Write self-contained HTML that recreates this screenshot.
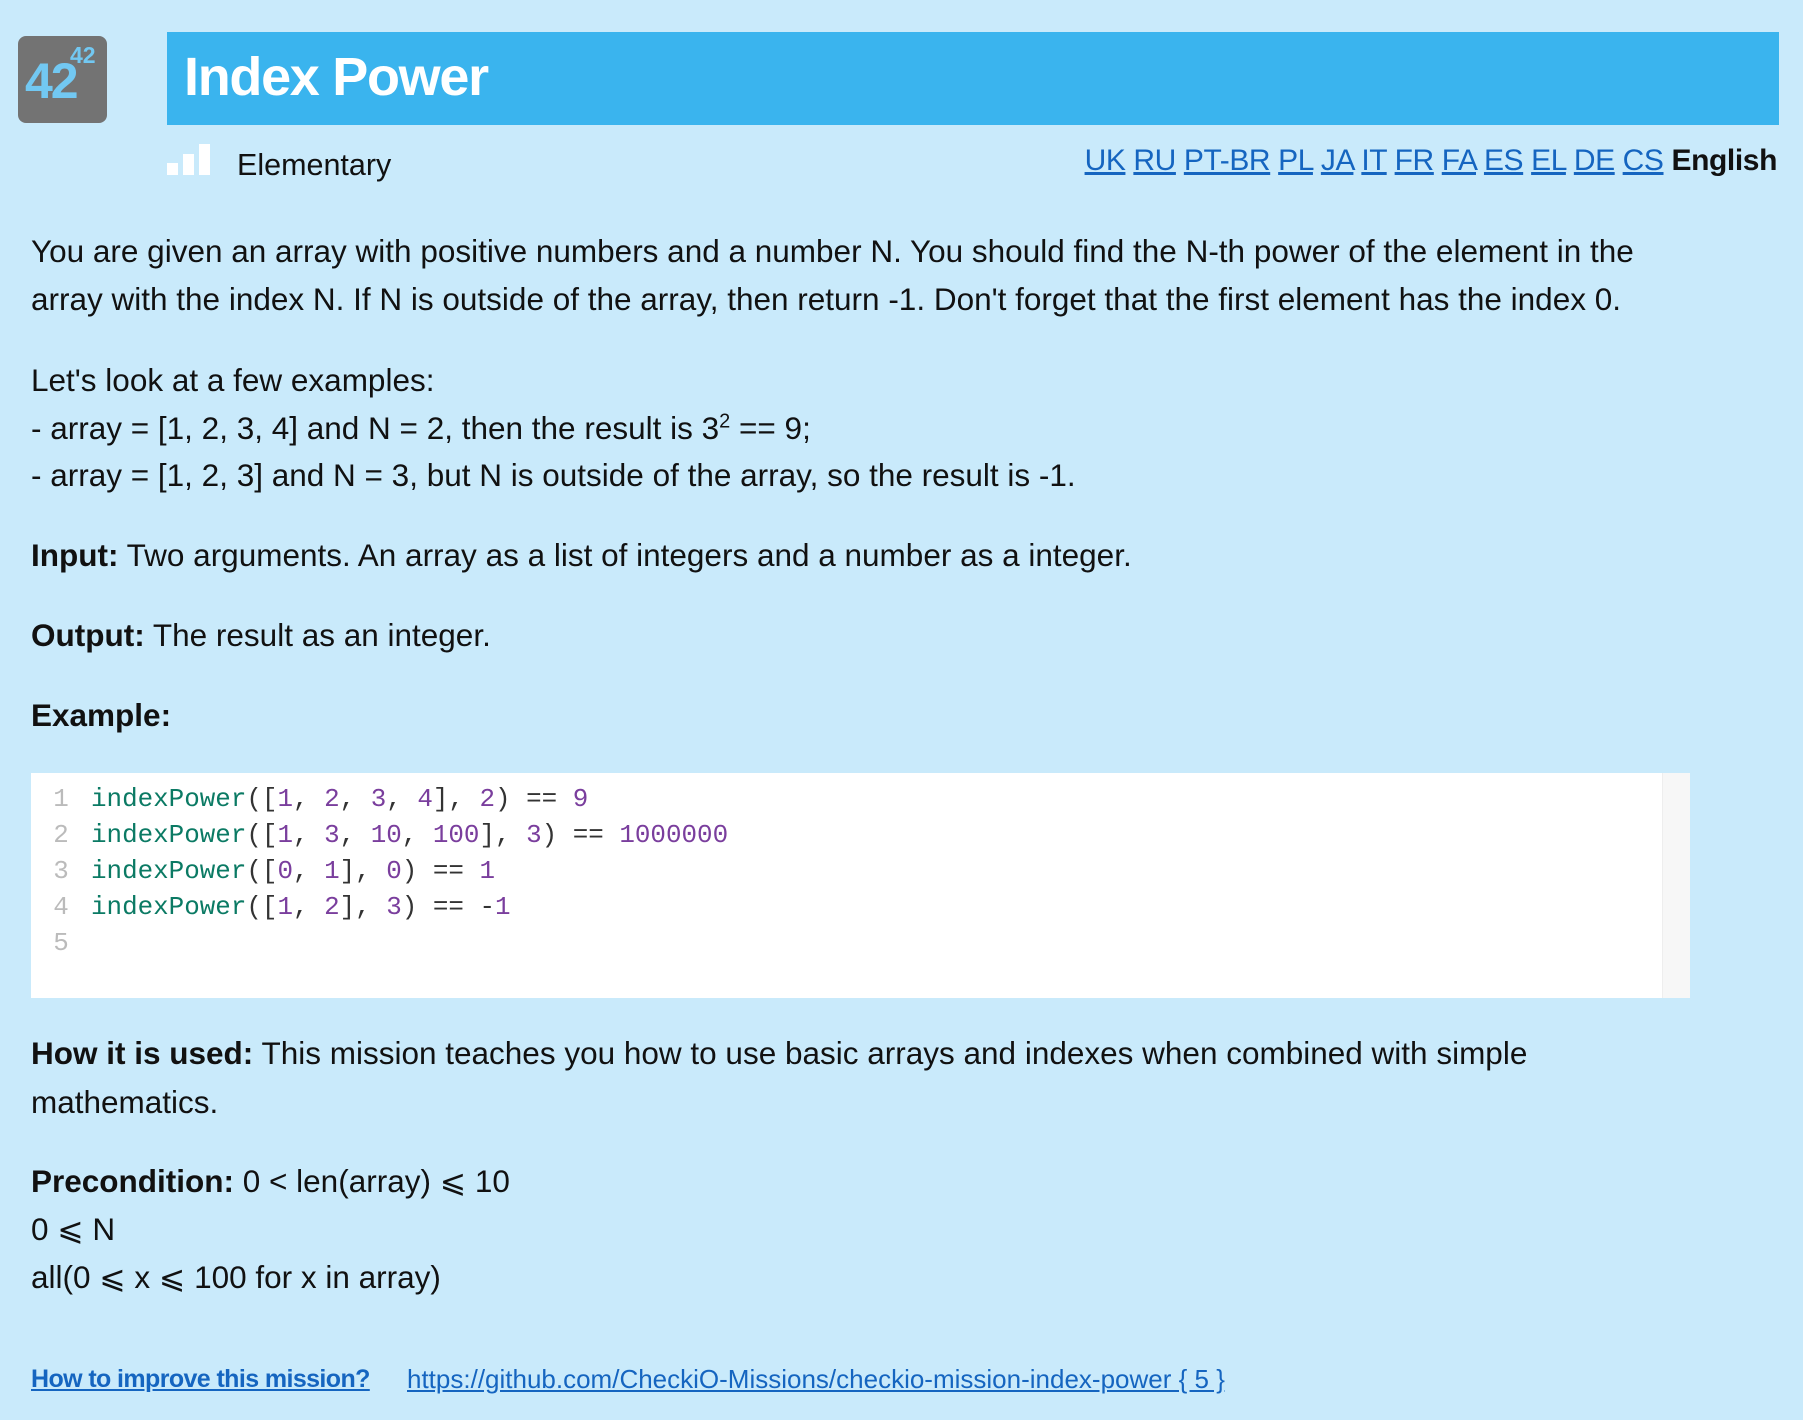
<!DOCTYPE html>
<html><head><meta charset="utf-8"><style>
body{margin:0;width:1803px;height:1420px;background:#c9eafb;font-family:"Liberation Sans",sans-serif;color:#111;position:relative;overflow:hidden}
.a{position:absolute;white-space:nowrap}
.t{font-size:31.5px;line-height:48px;left:31px}
a{color:#1565c0;text-decoration:underline}
.code{position:absolute;left:31px;top:773px;width:1659px;height:225px;background:#fff}
.sb{position:absolute;right:0;top:0;width:27px;height:225px;background:#f7f7f7;border-left:1px solid #eee}
.cl{position:absolute;left:0;font-family:"Liberation Mono",monospace;font-size:25.9px;line-height:36px;white-space:pre}
.n{color:#bbb;display:inline-block;width:60px;text-align:center}
.f{color:#0b7a64}.p{color:#7a3e9d}.o{color:#333}
sup{line-height:0;font-size:20px}
</style></head><body>
<div class="a" style="left:18px;top:36px;width:89px;height:87px;background:#737373;border-radius:8px">
<div class="a" style="left:7px;top:16px;font-size:50px;font-weight:bold;color:#72c8f2;letter-spacing:-2px">42</div>
<div class="a" style="left:52px;top:6px;font-size:23px;font-weight:bold;color:#72c8f2">42</div>
</div>
<div class="a" style="left:167px;top:32px;width:1612px;height:93px;background:#3ab4ee"></div>
<div class="a" style="left:184px;top:42px;font-size:54px;font-weight:bold;color:#fff;line-height:70px;letter-spacing:-1.3px">Index Power</div>
<div class="a" style="left:167px;top:163px;width:11px;height:12px;background:#fff"></div>
<div class="a" style="left:183px;top:154px;width:11px;height:21px;background:#fff"></div>
<div class="a" style="left:199px;top:144px;width:11px;height:31px;background:#fff"></div>
<div class="a" style="left:237px;top:141px;font-size:30.5px;line-height:48px">Elementary</div>
<div class="a" style="right:26px;top:137px;font-size:30px;line-height:48px;letter-spacing:-0.4px"><a>UK</a> <a>RU</a> <a>PT-BR</a> <a>PL</a> <a>JA</a> <a>IT</a> <a>FR</a> <a>FA</a> <a>ES</a> <a>EL</a> <a>DE</a> <a>CS</a> <b>English</b></div>

<div class="a t" style="top:227px">You are given an array with positive numbers and a number N. You should find the N-th power of the element in the</div>
<div class="a t" style="top:275px">array with the index N. If N is outside of the array, then return -1. Don't forget that the first element has the index 0.</div>
<div class="a t" style="top:356px">Let's look at a few examples:</div>
<div class="a t" style="top:404px">- array = [1, 2, 3, 4] and N = 2, then the result is 3<sup>2</sup> == 9;</div>
<div class="a t" style="top:451px">- array = [1, 2, 3] and N = 3, but N is outside of the array, so the result is -1.</div>
<div class="a t" style="top:531px"><b>Input:</b> Two arguments. An array as a list of integers and a number as a integer.</div>
<div class="a t" style="top:611px"><b>Output:</b> The result as an integer.</div>
<div class="a t" style="top:691px"><b>Example:</b></div>

<div class="code">
<div class="cl" style="top:8px"><span class="n">1</span><span class="f">indexPower</span><span class="o">([</span><span class="p">1</span><span class="o">, </span><span class="p">2</span><span class="o">, </span><span class="p">3</span><span class="o">, </span><span class="p">4</span><span class="o">], </span><span class="p">2</span><span class="o">) == </span><span class="p">9</span></div>
<div class="cl" style="top:44px"><span class="n">2</span><span class="f">indexPower</span><span class="o">([</span><span class="p">1</span><span class="o">, </span><span class="p">3</span><span class="o">, </span><span class="p">10</span><span class="o">, </span><span class="p">100</span><span class="o">], </span><span class="p">3</span><span class="o">) == </span><span class="p">1000000</span></div>
<div class="cl" style="top:80px"><span class="n">3</span><span class="f">indexPower</span><span class="o">([</span><span class="p">0</span><span class="o">, </span><span class="p">1</span><span class="o">], </span><span class="p">0</span><span class="o">) == </span><span class="p">1</span></div>
<div class="cl" style="top:116px"><span class="n">4</span><span class="f">indexPower</span><span class="o">([</span><span class="p">1</span><span class="o">, </span><span class="p">2</span><span class="o">], </span><span class="p">3</span><span class="o">) == -</span><span class="p">1</span></div>
<div class="cl" style="top:152px"><span class="n">5</span></div>
<div class="sb"></div>
</div>

<div class="a t" style="top:1029px"><b>How it is used:</b> This mission teaches you how to use basic arrays and indexes when combined with simple</div>
<div class="a t" style="top:1078px">mathematics.</div>
<div class="a t" style="top:1157px"><b>Precondition:</b> 0 &lt; len(array) ⩽ 10</div>
<div class="a t" style="top:1205px">0 ⩽ N</div>
<div class="a t" style="top:1253px">all(0 ⩽ x ⩽ 100 for x in array)</div>

<div class="a" style="left:31px;top:1365px;font-size:25px;line-height:28px;letter-spacing:-0.6px"><a><b>How to improve this mission?</b></a></div>
<div class="a" style="left:407px;top:1365px;font-size:26px;line-height:28px;letter-spacing:0px"><a>https://github.com/CheckiO-Missions/checkio-mission-index-power { 5 }</a></div>
</body></html>
